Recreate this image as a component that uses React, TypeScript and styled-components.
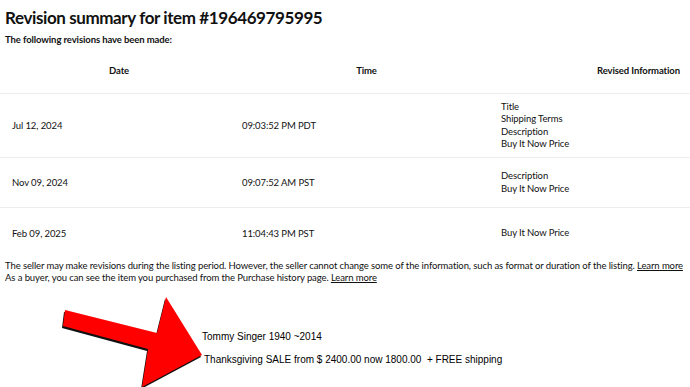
import React from 'react';
import styled, { createGlobalStyle } from 'styled-components';

const GlobalStyle = createGlobalStyle`
  html, body {
    margin: 0;
    padding: 0;
    background: #fff;
  }
  body {
    font-family: Lato, "Open Sans", sans-serif;
    color: #111;
  }
`;

type Revision = {
  date: string;
  time: string;
  fields: string[];
  height: number;
};

const revisions: Revision[] = [
  { date: 'Jul 12, 2024', time: '09:03:52 PM PDT', fields: ['Title', 'Shipping Terms', 'Description', 'Buy It Now Price'], height: 64 },
  { date: 'Nov 09, 2024', time: '09:07:52 AM PST', fields: ['Description', 'Buy It Now Price'], height: 50 },
  { date: 'Feb 09, 2025', time: '11:04:43 PM PST', fields: ['Buy It Now Price'], height: 51 },
];

const App: React.FC = () => {
  return (
    <Page>
      <GlobalStyle />
      <Title>Revision summary for item #196469795995</Title>
      <Subtitle>The following revisions have been made:</Subtitle>

      <Table>
        <HeadRow>
          <HeadCell align="center" $pad={8}>Date</HeadCell>
          <HeadCell align="center" $pad={10}>Time</HeadCell>
          <HeadCell align="right">Revised Information</HeadCell>
        </HeadRow>
        {revisions.map((r) => (
          <Row key={r.date} $h={r.height}>
            <Cell>{r.date}</Cell>
            <Cell>{r.time}</Cell>
            <Fields>
              {r.fields.map((f) => (
                <span key={f}>{f}</span>
              ))}
            </Fields>
          </Row>
        ))}
      </Table>

      <Note>
        <p>
          The seller may make revisions during the listing period. However, the seller cannot change some of the
          information, such as format or duration of the listing. <a href="#">Learn more</a>
        </p>
        <p>
          As a buyer, you can see the item you purchased from the Purchase history page. <a href="#">Learn more</a>
        </p>
      </Note>

      <Listing>
        <div>Tommy Singer 1940 ~2014</div>
        <div>Thanksgiving SALE from $ 2400.00 now 1800.00&nbsp; + FREE shipping</div>
      </Listing>

      <Arrow viewBox="0 0 690 387" width={690} height={387}>
        <polygon
          points="64,312 156,335 165,299 201,357 141,389 147,351 62,328"
          fill="#111"
        />
        <polygon
          points="65,310 157,333 166,297 202,355 142,387 148,349 63,326"
          fill="#ff0000"
        />
      </Arrow>
    </Page>
  );
};

const Page = styled.div`
  position: relative;
  width: 690px;
  height: 387px;
  overflow: hidden;
  padding: 6px 0 0 5px;
  box-sizing: border-box;
`;

const Title = styled.h1`
  margin: 0;
  font-size: 17px;
  font-weight: 700;
  line-height: 24px;
  letter-spacing: -0.4px;
`;

const Subtitle = styled.div`
  margin-top: 3px;
  font-size: 9.5px;
  font-weight: 700;
  line-height: 14px;
  letter-spacing: -0.1px;
`;

const Table = styled.div`
  display: flex;
  flex-direction: column;
`;

const columns = '230px 263px 1fr';

const HeadRow = styled.div`
  display: grid;
  grid-template-columns: ${columns};
  height: 46px;
  align-items: center;
  border-bottom: 1px solid #ececec;
  margin-left: -5px;
`;

const HeadCell = styled.div<{ align: 'center' | 'right' | 'left'; $pad?: number }>`
  font-size: 9.5px;
  font-weight: 700;
  letter-spacing: -0.1px;
  text-align: ${(p) => p.align};
  padding-left: ${(p) => p.$pad ?? 0}px;
  padding-right: ${(p) => (p.align === 'right' ? 10 : 0)}px;
`;

const Row = styled.div<{ $h: number }>`
  display: grid;
  grid-template-columns: ${columns};
  height: ${(p) => p.$h - 1}px;
  align-items: center;
  border-bottom: 1px solid #ececec;
  margin-left: -5px;
  padding-left: 12px;
  font-size: 9.5px;
  letter-spacing: -0.1px;
  &:last-child {
    border-bottom: none;
  }
`;

const Cell = styled.div``;

const Fields = styled.div`
  display: flex;
  flex-direction: column;
  line-height: 12.3px;
  margin-left: -4px;
`;

const Note = styled.div`
  margin-top: 2px;
  font-size: 9.5px;
  line-height: 12px;
  letter-spacing: -0.1px;
  p {
    margin: 0;
    white-space: nowrap;
  }
  a {
    color: #111;
    text-decoration: underline;
  }
`;

const Listing = styled.div`
  margin: 47px 0 0 197px;
  font-family: "Liberation Sans", Arial, sans-serif;
  font-size: 10px;
  color: #000;
  div:first-child {
    margin-bottom: 12px;
  }
  div:last-child {
    margin-left: 2px;
  }
`;

const Arrow = styled.svg`
  position: absolute;
  left: 0;
  top: 0;
  pointer-events: none;
`;

export default App;
